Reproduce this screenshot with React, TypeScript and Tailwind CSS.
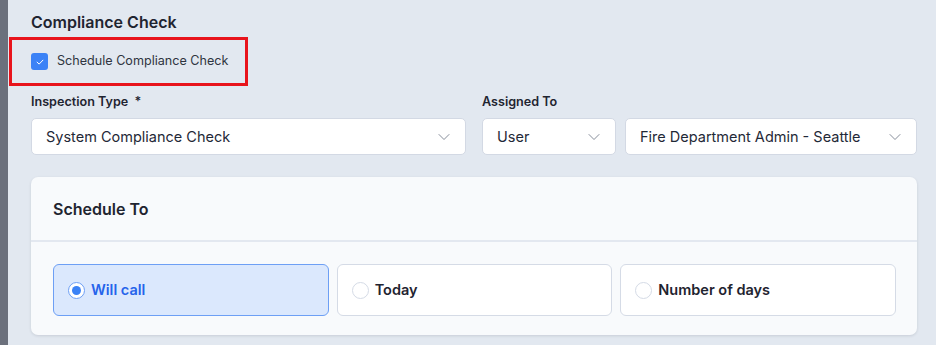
import { ChevronDown } from 'lucide-react';

const Select = ({ value, className = '' }: { value: string; className?: string }) => (
  <div
    className={`flex h-[37px] items-center justify-between rounded-[5px] border border-[#d3d9e4] bg-white pl-[14px] pr-[11px] text-[14.5px] text-[#1f2937] ${className}`}
  >
    <span>{value}</span>
    <ChevronDown className="h-[20px] w-[20px] text-[#7b8290]" strokeWidth={1.1} />
  </div>
);

const Option = ({ label, selected = false }: { label: string; selected?: boolean }) => (
  <div
    className={`flex h-[52px] flex-1 items-center gap-[6px] rounded-[6px] border pl-[14px] ${
      selected ? 'border-[#6d9ff5] bg-[#dbe8fd]' : 'border-[#d5dbe6] bg-white'
    }`}
  >
    {selected ? (
      <span className="flex h-[17px] w-[17px] items-center justify-center rounded-full border border-[#6d9ff5] bg-white">
        <span className="h-[9px] w-[9px] rounded-full bg-[#3b82f6]" />
      </span>
    ) : (
      <span className="h-[17px] w-[17px] rounded-full border border-[#d5dbe6] bg-white" />
    )}
    <span
      className={`text-[14.5px] font-semibold ${selected ? 'text-[#2563eb]' : 'text-[#1f2430]'}`}
    >
      {label}
    </span>
  </div>
);

export default function App() {
  return (
    <div className="flex h-[345px] w-[936px] overflow-hidden bg-[#e2e8f0] font-['Inter',sans-serif]">
      <div className="w-[8px] shrink-0 bg-[#6b707c]" />
      <div className="flex flex-1 flex-col pl-[23px] pr-[19px]">
        {/* Header */}
        <h2 className="mt-[11px] text-[16px] font-semibold leading-[22px] text-[#1f2430]">
          Compliance Check
        </h2>

        {/* Checkbox row */}
        <div className="-ml-[22px] mt-[4px] flex h-[49px] w-[239px] items-center gap-[9px] border-[3px] border-[#e8141c] pl-[19px]">
          <span className="flex h-[17px] w-[17px] items-center justify-center rounded-[3px] bg-[#3b82f6]">
            <svg viewBox="0 0 12 12" className="h-[10px] w-[10px]" fill="none">
              <path d="M2.5 6.2 5 8.5 9.5 3.8" stroke="white" strokeWidth="1.2" strokeLinecap="round" strokeLinejoin="round" />
            </svg>
          </span>
          <span className="text-[12.6px] text-[#2f3540]">Schedule Compliance Check</span>
        </div>

        {/* Fields */}
        <div className="mt-[7px] grid grid-cols-2 gap-[16px]">
          <div>
            <div className="mb-[7px] text-[12.6px] font-semibold leading-[18px] text-[#1f2430]">
              Inspection Type <span className="ml-[3px]">*</span>
            </div>
            <Select value="System Compliance Check" />
          </div>
          <div>
            <div className="mb-[7px] text-[12.6px] font-semibold leading-[18px] text-[#1f2430]">
              Assigned To
            </div>
            <div className="flex gap-[9px]">
              <Select value="User" className="w-[134px] shrink-0" />
              <Select value="Fire Department Admin - Seattle" className="flex-1" />
            </div>
          </div>
        </div>

        {/* Schedule card */}
        <div className="mt-[22px] rounded-[7px] bg-[#f8fafc] shadow-[0_1px_3px_rgba(15,23,42,0.12)]">
          <div className="flex h-[65px] items-center border-b-2 border-[#e3e8f0] pl-[22px]">
            <span className="text-[16px] font-semibold text-[#1f2430]">Schedule To</span>
          </div>
          <div className="flex gap-[8px] pb-[19px] pl-[22px] pr-[21px] pt-[22px]">
            <Option label="Will call" selected />
            <Option label="Today" />
            <Option label="Number of days" />
          </div>
        </div>
      </div>
    </div>
  );
}
